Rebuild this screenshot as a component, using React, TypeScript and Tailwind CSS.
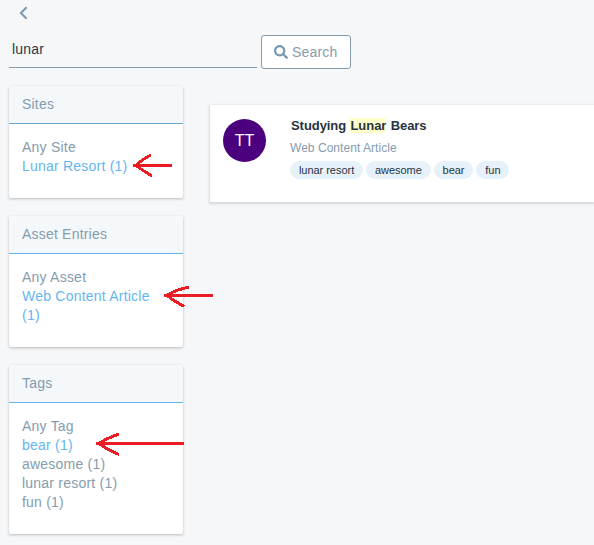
import type { ReactNode } from "react";
import { FaSearch } from "react-icons/fa";

type Entry = { label: string; active?: boolean };

function Arrow({ className, width, height, d }: { className: string; width: number; height: number; d: string }) {
  return (
    <svg className={`absolute ${className}`} width={width} height={height} viewBox={`0 0 ${width} ${height}`} fill="none" stroke="#ed1c24" strokeWidth="3" shapeRendering="crispEdges">
      <path d={d} />
    </svg>
  );
}

function Facet({ title, line, entries, children }: { title: string; line: string; entries: Entry[]; children: ReactNode }) {
  return (
    <section className="relative w-[174px] rounded-[2px] bg-white shadow-[0_1px_3px_rgba(0,0,0,0.25)]">
      <h2 className={`h-[38px] rounded-t-[2px] border-b bg-[#f4f8fb] px-[13px] text-[14px] leading-[37px] tracking-[0.2px] ${line}`}>{title}</h2>
      <ul className="px-[13px] pt-[14px] pb-[22px] text-[14px] leading-[19px] tracking-[0.22px]">
        {entries.map((e) => (
          <li key={e.label} className={e.active ? "text-[#65b6f0]" : ""}>{e.label}</li>
        ))}
      </ul>
      {children}
    </section>
  );
}

export default function App() {
  return (
    <div className="h-[545px] w-[594px] overflow-hidden bg-[#f5f7f9] font-['Liberation_Sans',Arial,sans-serif] text-[#869cad]">
      <div className="flex h-[35px] pt-[6px] pl-[19px]">
        <svg width="9" height="14" viewBox="0 0 9 14" fill="none" stroke="#7c98ae" strokeWidth="2">
          <path d="M7.6 1.2 1.9 7l5.7 5.8" />
        </svg>
      </div>
      <div className="flex gap-1 pl-[9px]">
        <input defaultValue="lunar" className="h-[33px] w-[248px] border-b border-[#869cad] bg-transparent pr-2 pb-1 pl-[3px] text-[14px] tracking-[0.2px] text-[#2b3a48] outline-none" />
        <button className="flex h-[34px] w-[90px] items-center rounded-[3px] border border-[#869cad] bg-white pl-3 text-[14px] tracking-[0.2px]">
          <FaSearch className="mr-[4px] size-[14px] shrink-0 text-[#7c98ae]" />
          Search
        </button>
      </div>
      <main className="flex gap-[27px] pt-[17px] pl-[9px]">
        <aside className="flex flex-col gap-[18px]">
          <Facet title="Sites" line="border-[#65a9d5]" entries={[{ label: "Any Site" }, { label: "Lunar Resort (1)", active: true }]}>
            <Arrow className="top-[67px] left-[123px]" width={42} height={26} d="M1 12.5H40M19 2Q9 7 4 12.5Q10 17 20 23" />
          </Facet>
          <Facet title="Asset Entries" line="border-[#65b6f0]" entries={[{ label: "Any Asset" }, { label: "Web Content Article (1)", active: true }]}>
            <Arrow className="top-[69px] left-[154px]" width={52} height={26} d="M1 10.5H50M26 2Q9 6 4 10.5Q11 16 21 21.5" />
          </Facet>
          <Facet title="Tags" line="border-[#65b6e5]" entries={[{ label: "Any Tag" }, { label: "bear (1)", active: true }, { label: "awesome (1)" }, { label: "lunar resort (1)" }, { label: "fun (1)" }]}>
            <Arrow className="top-[67px] left-[86px]" width={90} height={26} d="M1 11.5H89M24 2Q10 7 4 11.5Q11 17 24 22.5" />
          </Facet>
        </aside>
        <article className="mt-[19px] flex h-[97px] w-[384px] shrink-0 bg-white pt-[14px] pl-[13px] shadow-[0_1px_2px_1px_#d5dade]">
          <div className="mr-6 flex size-[43px] shrink-0 items-center justify-center rounded-full bg-[#4b007d] text-[16px] text-white">TT</div>
          <div>
            <h1 className="pl-px text-[13px] leading-[14px] font-bold tracking-[-0.06px] text-[#27333f] [word-spacing:0.8px]">
              Studying <mark className="bg-[#ffffcc] text-inherit">Lunar</mark> Bears
            </h1>
            <p className="mt-[7px] text-[12px] leading-[17px] tracking-[0.04px]">Web Content Article</p>
            <div className="mt-[4px] flex gap-[3px] text-[11px] leading-[18px] text-[#27333f]">
              {["lunar resort", "awesome", "bear", "fun"].map((t) => (
                <span key={t} className="rounded-full bg-[#e6f1fa] px-[8.9px] tracking-[-0.03px]">{t}</span>
              ))}
            </div>
          </div>
        </article>
      </main>
    </div>
  );
}
